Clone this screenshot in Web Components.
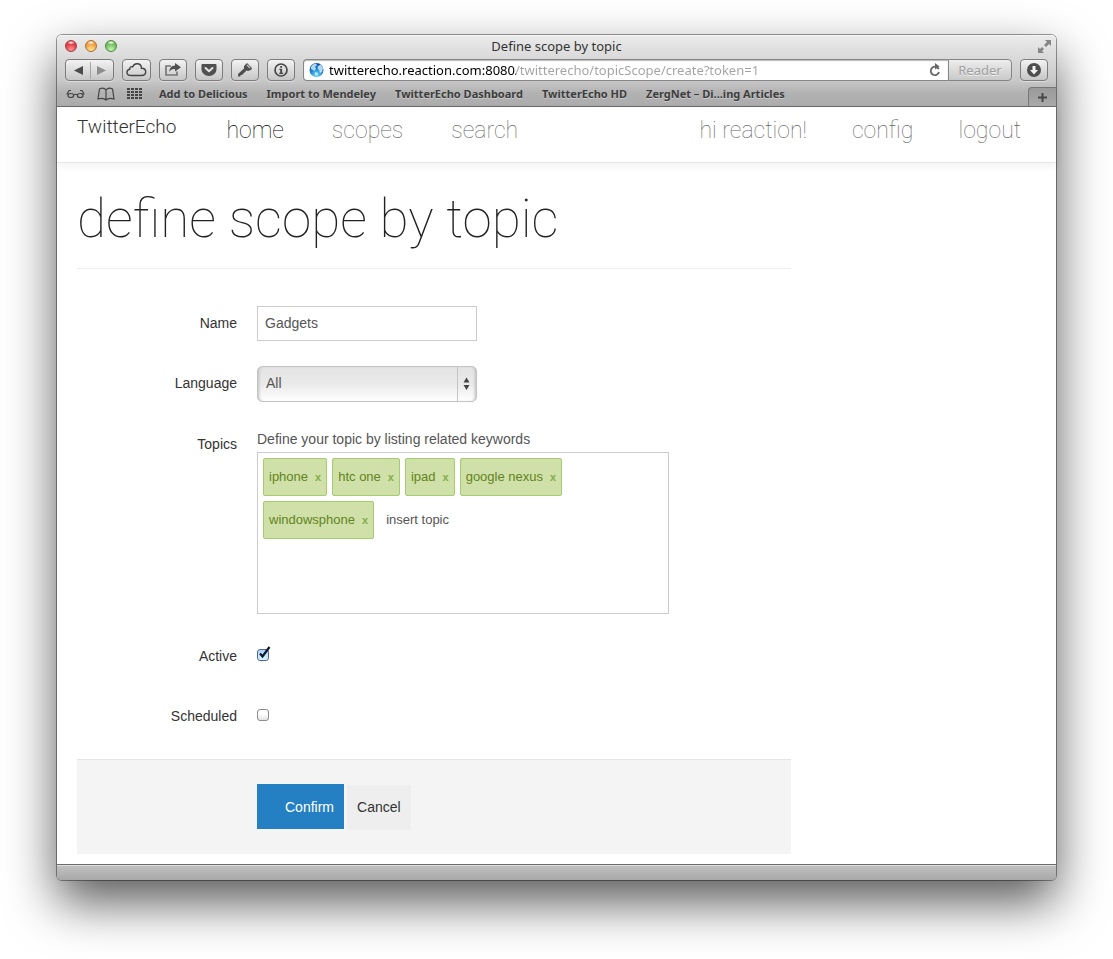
<!DOCTYPE html>
<html lang="en">
<head>
<meta charset="utf-8">
<meta name="viewport" content="width=device-width, initial-scale=1">
<title>Define scope by topic</title>
<style>
  body {
    margin: 0;
    padding: 35px 57px 79px;
    background: #fff;
    font-family: "Liberation Sans", Arial, sans-serif;
    font-size: 14px;
    color: #333;
  }
</style>
</head>
<body>
<browser-window>
  <browser-chrome slot="chrome"></browser-chrome>
  <site-nav></site-nav>
  <page-title>define scope by topic</page-title>
  <scope-form></scope-form>
</browser-window>

<script>
const define = (name, html, setup) => {
  const template = document.createElement('template');
  template.innerHTML = html;
  customElements.define(name, class extends HTMLElement {
    constructor() {
      super();
      this.attachShadow({ mode: 'open' }).append(template.content.cloneNode(true));
    }
    connectedCallback() { if (setup) setup(this, this.shadowRoot); }
  });
};

define('browser-window', `
  <style>
    :host {
      display: block;
      border-radius: 5px;
      background: #fff;
      box-shadow: 0 0 0 1px rgba(0,0,0,.38), 0 22px 50px rgba(0,0,0,.66);
    }
    footer {
      box-sizing: border-box;
      height: 16px;
      margin-top: 10px;
      border-top: 1px solid #6c6c6c;
      border-radius: 0 0 4px 4px;
      background: linear-gradient(#c2c2c2, #a8a8a8);
      box-shadow: inset 0 1px #dedede;
    }
  </style>
  <slot name="chrome"></slot>
  <main><slot></slot></main>
  <footer></footer>`);

define('tool-button', `
  <style>
    :host { display: block; flex: none; width: 28px; }
    button {
      display: flex; align-items: center; justify-content: center;
      box-sizing: border-box;
      width: 100%; height: 22px; padding: 0;
      border: 1px solid #7d7d7d; border-radius: 4px;
      background: linear-gradient(#f3f3f3, #c6c6c6);
      box-shadow: 0 1px rgba(255,255,255,.4);
      color: #555;
    }
  </style>
  <button type="button"><slot></slot></button>`,
  (host, root) => root.querySelector('button').setAttribute('aria-label', host.getAttribute('label')));

define('browser-chrome', `
  <style>
    :host {
      display: block;
      height: 71px;
      border-bottom: 1px solid #6a6a6a;
      border-radius: 5px 5px 0 0;
      background: linear-gradient(#ebebeb, #c9c9c9 45px, #b2b2b2 58px, #acacac);
      box-shadow: inset 0 1px #f6f6f6;
      font-family: "Noto Sans", "Open Sans", sans-serif;
      color: #333;
    }
    svg { display: block; }
    .title { display: grid; grid-template-columns: 60px 1fr 60px; align-items: center; height: 22px; padding-bottom: 2px; }
    .lights { display: flex; gap: 8px; padding-left: 8px; }
    .lights i {
      box-sizing: border-box; width: 12px; height: 12px; border-radius: 50%;
      border: 1px solid var(--rim);
      background: radial-gradient(ellipse 4px 2px at 50% 16%, #fff, transparent), radial-gradient(circle at 50% 90%, var(--glow), var(--fill) 65%);
    }
    h1 { margin: 0; font-size: 13px; line-height: 22px; font-weight: 400; text-align: center; }
    .expand { justify-self: end; margin-right: 4px; }
    .tools { display: flex; gap: 8px; padding: 0 8px; }
    .history { width: 49px; }
    .cloud { width: 29px; }
    .address { display: flex; flex: 1; height: 22px; min-width: 0; }
    .field {
      display: flex; align-items: center; flex: 1; min-width: 0; gap: 5px;
      box-sizing: border-box; padding: 0 7px 0 5px;
      border: 1px solid #868686; border-right: 0; border-radius: 4px 0 0 4px;
      background: #fff; box-shadow: inset 0 1px 1px #bbb;
    }
    input {
      flex: 1; min-width: 0; border: 0; padding: 0; outline: 0;
      font: 13px/18px "Noto Sans", sans-serif;
      color: transparent;
      background: linear-gradient(90deg, #000 187px, #a2a2a2 187px);
      -webkit-background-clip: text; background-clip: text;
    }
    .reader {
      box-sizing: border-box; width: 64px; height: 22px; padding: 0;
      border: 1px solid #858585; border-radius: 0 4px 4px 0;
      background: linear-gradient(#ededed, #c9c9c9);
      font: 13px/18px "Noto Sans", sans-serif; color: #a0a0a0; text-shadow: 0 1px #f0f0f0;
    }
    .bookmarks { display: flex; align-items: center; height: 25px; padding-left: 9px; }
    .bookmarks > svg { margin-right: 12px; }
    .bookmarks nav { display: flex; gap: 19px; flex: 1; padding-left: 4px; }
    a { font-size: 11px; line-height: 18px; font-weight: 700; color: #3d3d3d; text-decoration: none; white-space: nowrap; text-shadow: 0 1px rgba(255,255,255,.35); }
    .newtab {
      align-self: flex-end; display: flex; align-items: center; justify-content: center;
      width: 28px; height: 19px; padding: 0; border: 1px solid #777; border-width: 1px 0 0 1px;
      border-radius: 4px 0 0 0; background: linear-gradient(#9b9b9b, #a8a8a8);
    }
  </style>
  <div class="title">
    <div class="lights">
      <i style="--rim:#a33a3e;--fill:#e0323c;--glow:#ff9a9a"></i>
      <i style="--rim:#ac6f2c;--fill:#ef9a3c;--glow:#ffe79a"></i>
      <i style="--rim:#4c8a3c;--fill:#6cbb5b;--glow:#c8f5b0"></i>
    </div>
    <h1>Define scope by topic</h1>
    <svg class="expand" width="15" height="15" viewBox="0 0 15 15" fill="#858585"><path d="M8 1h6v6l-2-2-3 3-2-2 3-3zM1 8l2 2 2-2 2 2-2 2 2 2H1z"/></svg>
  </div>
  <div class="tools">
    <tool-button class="history" label="Back and forward"><svg width="47" height="20" viewBox="0 0 47 20"><path d="M8 10.500 17 6v9z" fill="#4b4b4b"/><path d="M24.500 2v17" stroke="#a5a5a5"/><path d="M40 10.500 31 6v9z" fill="#8e8e8e"/></svg></tool-button>
    <tool-button class="cloud" label="iCloud tabs"><svg width="21" height="16" viewBox="0 0 21 16"><path d="M5 13.500C2.500 13.500 1 12 1 10.200c0-1.700 1.300-2.700 2.700-2.900C3.600 5 5 4.200 6.700 4.800 7.600 2.700 9 1.800 11 1.800c2.600 0 4.400 1.900 4.400 4.400 2.700 0 4.300 1.500 4.300 3.600 0 2.300-1.500 3.700-4 3.700z" fill="none" stroke="#454545" stroke-width="1.400"/></svg></tool-button>
    <tool-button label="Share"><svg width="18" height="16" viewBox="0 0 18 16"><path d="M7 4H2v9h11V9.500" fill="none" stroke="#777" stroke-width="1.700"/><path d="M11 1l6 4.300-6 4.200V7C8 6.800 6.500 8 5.300 10 5.500 6 7.500 3.600 11 3.500z" fill="#505050"/></svg></tool-button>
    <tool-button label="Pocket"><svg width="16" height="14" viewBox="0 0 16 14"><path d="M1.500 1h13q1 0 1 1v4.500a7.500 6.500 0 0 1-15 0V2q0-1 1-1z" fill="#505050"/><path d="M4.500 5 8 8.300 11.500 5" fill="none" stroke="#e5e5e5" stroke-width="2" stroke-linecap="round" stroke-linejoin="round"/></svg></tool-button>
    <tool-button label="Passwords"><svg width="16" height="16" viewBox="0 0 16 16"><path d="M10 1 15 6l-1 2-3 1-1.500-.5L5 13H3.500v1.500H1V12l6-5.500L7 4z" fill="#505050"/><path d="m10 3 3 3" stroke="#c8c8c8" stroke-width="1.200"/></svg></tool-button>
    <tool-button label="Page info"><svg width="16" height="16" viewBox="0 0 16 16"><circle cx="8" cy="8" r="6" fill="none" stroke="#484848" stroke-width="1.700"/><path d="M7.200 4h1.900v1.700H7.200zM6.300 6.700h2.800v4h1V12H6.200v-1.300h1V8h-.9z" fill="#484848"/></svg></tool-button>
    <div class="address">
      <label class="field">
        <svg width="15" height="16" viewBox="0 0 15 16"><defs><radialGradient id="g" cx=".5" cy=".85" r=".9"><stop offset="0" stop-color="#6fe0ff"/><stop offset=".5" stop-color="#2080cf"/><stop offset="1" stop-color="#0d3f94"/></radialGradient></defs><circle cx="7.500" cy="8" r="7" fill="url(#g)"/><path d="M2 5c1-2 3-3.500 5-3.500L8 3 6 5l1 1.500L5.500 9 4 8 2 7zM9 4l3-1.500L14 6l-1 4-2 1-1-3L8.500 6zM6 10l3 1-1 3-2-1z" fill="#c7edff" opacity=".85"/></svg>
        <input type="text" aria-label="Address" spellcheck="false" value="twitterecho.reaction.com:8080/twitterecho/topicScope/create?token=1">
        <svg width="12" height="14" viewBox="0 0 12 14"><path d="M9.800 6.200A4.200 4.200 0 1 0 10 9" fill="none" stroke="#666" stroke-width="1.800"/><path d="M6 0v6.500L10.500 3.500z" fill="#666"/></svg>
      </label>
      <button type="button" class="reader">Reader</button>
    </div>
    <tool-button label="Downloads"><svg width="16" height="16" viewBox="0 0 16 16"><circle cx="8" cy="8" r="7" fill="#4e4e4e"/><path d="M6.500 4h3v4H12l-4 4.500L4 8h2.500z" fill="#f2f2f2"/></svg></tool-button>
  </div>
  <div class="bookmarks">
    <svg width="19" height="14" viewBox="0 0 19 14" fill="none" stroke="#454545" stroke-width="1.200"><path d="M.5 7h3M15.500 7h3M1 7l2-3.500h2M18 7l-2-3.500h-2M7.500 8q2-1.500 4 0"/><ellipse cx="4.800" cy="8.500" rx="2.800" ry="2"/><ellipse cx="14.200" cy="8.500" rx="2.800" ry="2"/></svg>
    <svg width="18" height="14" viewBox="0 0 18 14" fill="none" stroke="#454545" stroke-width="1.200"><path d="M9 3C7.500 1 4.500 1 2.500 2L1 12c3-1 6-1 8 1 2-2 5-2 8-1L15.500 2C13.500 1 10.500 1 9 3zM9 3v10"/></svg>
    <svg width="16" height="12" viewBox="0 0 16 12" stroke="#454545" stroke-width="2" stroke-dasharray="3 1"><path d="M0 1h16M0 4h16M0 7h16M0 10h16"/></svg>
    <nav>
      <a href="#">Add to Delicious</a>
      <a href="#">Import to Mendeley</a>
      <a href="#">TwitterEcho Dashboard</a>
      <a href="#">TwitterEcho HD</a>
      <a href="#">ZergNet – Di...ing Articles</a>
    </nav>
    <button type="button" class="newtab" aria-label="New tab"><svg width="9" height="9" viewBox="0 0 9 9"><path d="M4.500 0v9M0 4.500h9" stroke="#484848" stroke-width="2"/></svg></button>
  </div>`);

define('site-nav', `
  <style>
    :host {
      display: flex; align-items: flex-start; justify-content: space-between;
      height: 55px; padding: 0 35px 0 20px;
      border-bottom: 1px solid #e6e6e6;
      box-shadow: 0 3px 8px rgba(0,0,0,.06);
    }
    nav { display: flex; align-items: flex-start; gap: 48px; }
    .account { gap: 45px; }
    a { font: 100 23px/48px Roboto, sans-serif; color: #666; text-decoration: none; white-space: nowrap; }
    .brand { font-size: 19px; font-weight: 300; line-height: 40px; color: #333; margin-right: 2px; }
    .here { color: #000; }
  </style>
  <nav>
    <a class="brand" href="#">TwitterEcho</a>
    <a class="here" href="#">home</a>
    <a href="#">scopes</a>
    <a href="#">search</a>
  </nav>
  <nav class="account">
    <a href="#">hi reaction!</a>
    <a href="#">config</a>
    <a href="#">logout</a>
  </nav>`);

define('page-title', `
  <style>
    :host { display: block; max-width: 714px; margin: 0 20px; border-bottom: 1px solid #eee; }
    h1 { margin: 0; padding: 16px 0 9px; font: 100 53px/80px Roboto, sans-serif; color: #222; }
  </style>
  <h1><slot></slot></h1>`);

define('keyword-tag', `
  <style>
    :host {
      display: flex; align-items: center; gap: 7px;
      box-sizing: border-box; height: 38px; padding: 0 5px;
      border: 1px solid #a5cd6e; border-radius: 2px;
      background: #cfe0a8; color: #638421; font-size: 13px; line-height: 20px;
    }
    button { border: 0; padding: 0; background: none; font: 700 11px/20px "Liberation Sans", sans-serif; color: #82ad45; }
  </style>
  <span><slot></slot></span><button type="button">x</button>`);

define('check-row', `
  <style>
    :host { display: block; }
    label { display: grid; grid-template-columns: 160px 1fr; column-gap: 20px; align-items: center; line-height: 35px; }
    .text { text-align: right; }
    .box { position: relative; width: 12px; height: 12px; margin-bottom: 4px; }
    input {
      appearance: none; display: block; box-sizing: border-box; width: 12px; height: 12px; margin: 0;
      border: 1px solid #8c8c8c; border-radius: 3px; background: linear-gradient(#fff 40%, #e4e4e4);
    }
    input:checked { border-color: #55669c; background: linear-gradient(#a9d4f5, #d6f4ff); }
    svg { position: absolute; left: 0; top: -3px; pointer-events: none; display: none; }
    input:checked + svg { display: block; }
  </style>
  <label><span class="text"><slot></slot></span><span class="box"><input type="checkbox"><svg width="14" height="14" viewBox="0 0 14 14"><path d="M3 7.500l2.500 3L12.500 1" fill="none" stroke="#0b1830" stroke-width="2.200"/></svg></span></label>`,
  (host, root) => { root.querySelector('input').checked = host.hasAttribute('checked'); });

define('scope-form', `
  <style>
    :host { display: block; max-width: 714px; margin: 37px 20px 0; }
    form { display: grid; gap: 25px; margin: 0; }
    .row { display: grid; grid-template-columns: 160px 1fr; column-gap: 20px; align-items: start; }
    .row > label { text-align: right; line-height: 35px; }
    .name, select { box-sizing: border-box; width: 220px; margin: 0; font: 14px/20px "Liberation Sans", sans-serif; color: #555; outline: 0; }
    .name { height: 35px; padding: 0 7px 2px; border: 1px solid #ccc; background: #fff; }
    .select { position: relative; width: 220px; height: 36px; }
    select {
      appearance: none; display: block; height: 36px; padding: 0 24px 2px 8px;
      border: 1px solid #c4c4c4; border-radius: 5px;
      background: linear-gradient(#e4e4e4, #eaeaea 50%, #fff);
      box-shadow: inset 3px 0 3px -2px #bbb, inset -3px 0 3px -2px #bbb;
    }
    .select svg { position: absolute; right: 0; top: 0; pointer-events: none; }
    .help { margin: 0; line-height: 25px; color: #555; }
    .keywords {
      display: flex; flex-wrap: wrap; align-content: flex-start; gap: 5px;
      box-sizing: border-box; width: 412px; max-width: 100%; height: 162px; padding: 5px;
      border: 1px solid #ccc;
    }
    .keywords input { width: 90px; height: 38px; box-sizing: border-box; border: 0; padding: 0 7px 1px; outline: 0; background: none; font: 13px/20px "Liberation Sans", sans-serif; color: #555; }
    .actions { padding: 24px 0; background: #f4f4f4; border-top: 1px solid #e5e5e5; }
    .buttons { grid-column: 2; display: flex; gap: 3px; }
    button { border: 0; height: 45px; font: 14px/20px "Liberation Sans", sans-serif; }
    .ok { padding: 0 10px 0 28px; background: #2480c2; color: #fff; }
    .cancel { margin-top: 1px; padding: 0 10px 2px; background: #eee; color: #333; }
  </style>
  <form>
    <div class="row"><label for="name">Name</label><input class="name" id="name" type="text" value="Gadgets"></div>
    <div class="row"><label for="language">Language</label>
      <div class="select">
        <select id="language"><option>All</option></select>
        <svg width="20" height="36" viewBox="0 0 20 36"><path d="M.5 1v34" stroke="#c4c4c4"/><path d="M6.500 16.500l3-5 3 5zM6.500 19h6l-3 5z" fill="#444"/></svg>
      </div>
    </div>
    <div class="row"><label for="topic">Topics</label>
      <div>
        <p class="help">Define your topic by listing related keywords</p>
        <div class="keywords">
          <keyword-tag>iphone</keyword-tag>
          <keyword-tag>htc one</keyword-tag>
          <keyword-tag>ipad</keyword-tag>
          <keyword-tag>google nexus</keyword-tag>
          <keyword-tag>windowsphone</keyword-tag>
          <input id="topic" type="text" value="insert topic">
        </div>
      </div>
    </div>
    <check-row checked>Active</check-row>
    <check-row>Scheduled</check-row>
    <div class="row actions"><div class="buttons"><button type="button" class="ok">Confirm</button><button type="button" class="cancel">Cancel</button></div></div>
  </form>`);
</script>
</body>
</html>
